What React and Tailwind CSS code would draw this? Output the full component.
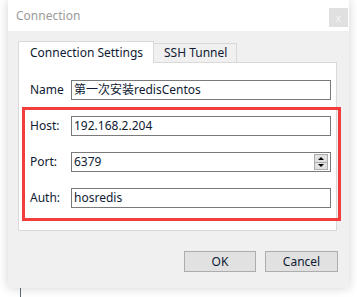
import React from "react";

const font = { fontFamily: '"Noto Sans", "Noto Sans CJK SC", sans-serif' };

const Field = ({ label, value, spinner }) => (
  <div className="flex items-center h-[20px]">
    <span className="w-[41px] text-[12px] text-[#0f1a33] leading-none">{label}</span>
    <div className="relative flex items-center w-[260px] h-[20px] border border-[#7a7a7a] bg-white px-[2px] text-[12px] text-[#0f1a33] leading-none">
      {value}
      {spinner && (
        <div className="absolute right-[2px] top-[1px] flex flex-col w-[14px] h-[16px] border border-[#adadad] bg-[#e1e1e1]">
          <div className="flex-1 flex items-center justify-center border-b border-[#adadad]">
            <div className="w-0 h-0 border-l-[3px] border-r-[3px] border-b-[3px] border-l-transparent border-r-transparent border-b-black" />
          </div>
          <div className="flex-1 flex items-center justify-center">
            <div className="w-0 h-0 border-l-[3px] border-r-[3px] border-t-[3px] border-l-transparent border-r-transparent border-t-black" />
          </div>
        </div>
      )}
    </div>
  </div>
);

export default function App() {
  return (
    <div className="relative w-[357px] h-[297px] bg-white overflow-hidden" style={font}>
      <div className="ml-[8px] w-[341px] h-[288px] bg-[#f0f0f0] shadow-[0_0_10px_rgba(0,0,0,0.18)] flex flex-col">
        <div className="h-[31px] bg-white flex items-start justify-between">
          <span className="pl-[8px] pt-[8px] text-[12px] text-[#9a9a9a] leading-[16px]">Connection</span>
          <div className="mt-[8px] mr-[1px] w-[19px] h-[19px] bg-[#e0e0e0] flex items-center justify-center text-[10px] text-[#f6f6f6] leading-none">
            x
          </div>
        </div>

        <div className="pl-[10px] pr-[12px] pt-[10px]">
          <div className="flex items-end h-[21px]">
            <div className="relative z-10 w-[136px] h-[22px] -mb-px bg-white border border-b-0 border-[#d9d9d9] flex items-center pl-[11px] text-[12px] text-[#0f1a33] leading-none">
              Connection Settings
            </div>
            <div className="w-[83px] h-[19px] bg-[#f0f0f0] border border-l-0 border-b-0 border-[#d9d9d9] flex items-center pl-[10px] text-[12px] text-[#0f1a33] leading-none">
              SSH Tunnel
            </div>
          </div>
          <div className="h-[169px] bg-white border border-[#d9d9d9] pl-[11px] pt-[17px] flex flex-col gap-[16px]">
            <Field label="Name" value="第一次安装redisCentos" />
            <Field label="Host:" value="192.168.2.204" />
            <Field label="Port:" value="6379" spinner />
            <Field label="Auth:" value="hosredis" />
          </div>
        </div>

        <div className="flex justify-end gap-[9px] pr-[11px] pt-[20px]">
          <button className="w-[72px] h-[21px] bg-[#e1e1e1] border border-[#adadad] text-[12px] text-[#0f1a33] leading-none">OK</button>
          <button className="w-[73px] h-[21px] bg-[#e1e1e1] border border-[#adadad] text-[12px] text-[#0f1a33] leading-none">Cancel</button>
        </div>
      </div>
      <div className="ml-[20px] w-px h-[9px] bg-[#5a6378]" />

      <div className="absolute left-[22px] top-[107px] w-[319px] h-[114px] border-[3px] border-[#f33c3c]" />
    </div>
  );
}
